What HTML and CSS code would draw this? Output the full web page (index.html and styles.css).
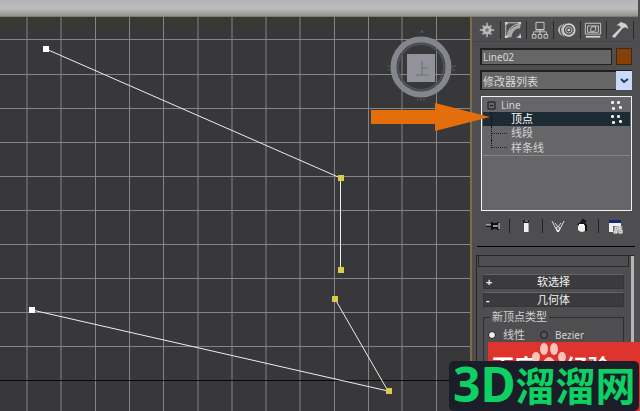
FILE: index.html
```html
<!DOCTYPE html>
<html lang="zh-CN">
<head>
<meta charset="utf-8">
<title>Line02</title>
<link rel="stylesheet" href="styles.css">
</head>
<body>
<header class="titlebar"></header>
<main class="workspace">
  <section class="viewport">
    <svg class="scene" aria-hidden="true">
      <path class="grid" d="M27 0V395M61 0V395M95.500 0V395M129.500 0V395M163.500 0V395M198 0V395M232 0V395M266 0V395M300 0V395M334.500 0V395M368.500 0V395M402 0V395M436.500 0V395M0 22.500H470M0 57.500H470M0 91.500H470M0 125.500H470M0 159.500H470M0 193.500H470M0 227.500H470M0 261.500H470M0 295.500H470M0 329.500H470"/>
      <path class="axis" d="M0 363.500H470"/>
      <path class="spline" d="M46 32L340.500 161V253M335 282L388 374L32 293"/>
      <path class="vertex" d="M43 29h6v6h-6zM29 290h6v6h-6z"/>
      <path class="vertex picked" d="M338 158h6v6h-6zM338 250h6v6h-6zM332 279h6v6h-6zM386 371h6v6h-6z"/>
      <g class="compass">
        <circle cx="421" cy="50" r="27.500"/>
        <circle class="inner" cx="421" cy="50" r="23"/>
        <path class="face" d="M407 37h28v28h-28z"/>
        <path class="mark" d="M422 44v14M416 58h13M422 51h6"/>
        <path class="ticks" d="M420 16l2-3 1 3M387 49h4M388 53h3M452 49h4M452 53h3M418 81v3M421 80v4M424 81v3"/>
      </g>
    </svg>
  </section>
  <aside class="panel">
    <nav class="tabs">
      <button aria-label="创建"><svg viewBox="0 0 20 20"><path class="line soft" d="M10 2V18M2 10H18M5 5l10 10M15 5L5 15"/><circle cx="10" cy="10" r="5" fill="#b8b8b8"/><circle cx="10" cy="10" r="2" fill="#777"/></svg></button>
      <button aria-label="修改"><svg viewBox="0 0 20 20"><path class="line thin" d="M2 18V2H18M7 18Q8 8 18 6M4 18Q3 5 18 3M14 18H18V14"/><path d="M4 18Q4 7 18 4V8Q10 8 8 18z" fill="#aaa"/><path class="fill" d="M1 1h3v3H1zM16 1h3v3h-3zM1 16h3v3H1zM16 16h3v3h-3z"/></svg></button>
      <button aria-label="层次"><svg viewBox="0 0 20 20"><path d="M5.500 1.500h9v8h-9z" fill="#777" class="line thin"/><path class="line thin" d="M5 10h10M10 9v6M3 15v-3h14v3M1.500 15h4v4h-4zM8 15h4v4H8zM14.500 15h4v4h-4z"/></svg></button>
      <button aria-label="运动"><svg viewBox="0 0 20 20"><circle class="line" cx="12" cy="10" r="6.500"/><circle class="line thin" cx="12" cy="10" r="3.500"/><circle class="fill" cx="12" cy="10" r="1.500"/><path class="line thin" d="M7 3Q1 10 7 17M4 4Q-1 10 4 16M2 6Q-1 10 2 14"/></svg></button>
      <button aria-label="显示"><svg viewBox="0 0 20 20"><path class="line thin" d="M1.500 2.500h17v12h-17zM4 5.500h12v7H4z"/><path class="line" d="M2 17.500h16"/><path class="line thin" d="M7.500 11.500V8l2-1.500h3.500V10l-2 1.500z"/></svg></button>
      <button aria-label="工具"><svg viewBox="0 0 20 20"><path class="fill" d="M6 5l5-4 5 2 2 2 1 4-3-2-3 1L4 19l-3-2L11 7 9 5z"/></svg></button>
    </nav>
    <div class="name-row">
      <input class="name" aria-label="名称" value="Line02">
      <button class="swatch" aria-label="颜色"></button>
    </div>
    <div class="picker">
      <select aria-label="修改器列表"><option>修改器列表</option></select>
      <svg viewBox="0 0 16 19" aria-hidden="true"><path d="M0 0h16v19H0z" fill="#c9dafb"/><path d="M5 8l3 3 4-3" fill="none" stroke="#27374f" stroke-width="2"/></svg>
    </div>
    <ul class="stack">
      <li class="root"><svg class="toggle" viewBox="0 0 9 9"><path d="M1 1h7v7H1zM3 4.500h3"/></svg><span>Line</span><i class="dots"></i></li>
      <li class="chosen"><b class="branch"></b><span>顶点</span><i class="dots"></i></li>
      <li><b class="branch"></b><span>线段</span></li>
      <li class="last"><b class="branch"></b><span>样条线</span></li>
    </ul>
    <div class="tools">
      <button aria-label="锁定堆栈"><svg viewBox="0 0 16 16"><path d="M1 8h6M7 4v8M8 6h4M8 10h4M13 4v8" stroke="#111" stroke-width="2"/><path d="M1 7h5M8 8h5M14 5v6" stroke="#ddd"/></svg></button>
      <span class="bar"></span>
      <button aria-label="显示最终结果"><svg viewBox="0 0 16 16"><path d="M5 2h6v3H5z" fill="#222"/><path d="M6 5h4v9H6z" fill="#eee"/><path d="M10.500 5v9M7 3h3" stroke="#aaa"/></svg></button>
      <span class="bar"></span>
      <button aria-label="使唯一"><svg viewBox="0 0 16 16"><path d="M2 3l5 10h2l5-10M5 5l3 4 3-4" fill="none" stroke="#ddd"/><path d="M6 9h4l-1 5H7z" fill="#eee"/><path d="M8 9v3" stroke="#111"/></svg></button>
      <button aria-label="移除修改器"><svg viewBox="0 0 16 16"><path d="M4 7h8v5q-4 4-8 0z" fill="#eee"/><path d="M4 7q4-4 8 0M7 5l2-3 3 2M12 7v6" fill="none" stroke="#111" stroke-width="2"/><path d="M5 7h5" stroke="#fff" stroke-width="2"/></svg></button>
      <span class="bar"></span>
      <button aria-label="配置修改器集"><svg viewBox="0 0 16 16"><path d="M2 2h12v12H2z" fill="#eee"/><path d="M2 2h12v3H2z" fill="#16277a"/><path d="M6 8h10v8H6z" fill="#666"/><path d="M4 7h3M4 10h2M8 9h3v3H8zM12 8h2v3h-2zM7 13h3v2H7zM12 12h3v3h-3z" stroke="#eee" fill="#999"/></svg></button>
    </div>
    <div class="rollouts">
      <div class="scroll">
        <div class="blank"></div>
        <button class="roll"><span>+</span>软选择</button>
        <button class="roll"><span>-</span>几何体</button>
        <fieldset class="group">
          <legend>新顶点类型</legend>
          <label><input type="radio" name="kind" checked>线性</label>
          <label><input type="radio" name="kind">Bezier</label>
        </fieldset>
      </div>
    </div>
  </aside>
</main>
<svg class="arrow" viewBox="0 0 121 28" aria-hidden="true"><path d="M1 7H65V0L120 14L65 28V21H1z"/></svg>
<div class="banner">
  <span>百度</span>
  <svg class="paw" viewBox="0 0 34 26" aria-hidden="true"><ellipse cx="12" cy="6" rx="4" ry="6"/><ellipse cx="22" cy="6" rx="4" ry="6"/><ellipse cx="4" cy="14" rx="4" ry="5"/><ellipse cx="30" cy="14" rx="4" ry="5"/><path d="M17 14q5 0 9 12H8q4-12 9-12z"/></svg>
  <span>经验</span>
</div>
<div class="watermark"><span class="latin">3D</span><span>溜溜网</span></div>
</body>
</html>
```
FILE: styles.css
```css
* { box-sizing: border-box; }
body {
  margin: 0;
  height: 100vh;
  display: flex;
  flex-direction: column;
  position: relative;
  overflow: hidden;
  background: #4e4e50;
  color: #d2d2d2;
  font: 12px/14px "Noto Sans", "Noto Sans CJK SC", sans-serif;
}
button { border: 0; padding: 0; background: none; color: inherit; font: inherit; }
svg { display: block; }

.titlebar {
  flex: 0 0 17px;
  margin-right: 2px;
  background: linear-gradient(#b4b4b8, #bcbcbe 50%, #99998f 90%, #777064);
}
.workspace { flex: 1; min-height: 0; display: grid; grid-template-columns: 1fr 168px; }

.viewport {
  min-width: 0;
  border: solid #796e42;
  border-width: 0 2px 0 0;
  background: linear-gradient(#39392f, #38373a 16px);
}
.scene { width: 100%; height: 100%; }
.scene path, .scene circle { fill: none; }
.scene .grid { stroke: #858585; }
.scene .axis { stroke: #080808; }
.scene .spline { stroke: #eee; }
.scene .vertex { fill: #fff; }
.scene .picked { fill: #dccb4a; }
.compass circle { stroke: #84868d; stroke-width: 6; }
.compass .inner { stroke: #515259; stroke-width: 2; }
.scene .face { fill: #92939a; }
.compass .mark { stroke: #6d6e75; stroke-width: 1; }
.compass .ticks { stroke: #5a5b60; }

.panel { min-width: 0; padding: 0 8px 0 8px; display: flex; flex-direction: column; }
.tabs { display: grid; grid-template-columns: repeat(6, 1fr); height: 25px; margin: 0 -2px 6px -6px; border-bottom: 1px solid #444; }
.tabs button { display: grid; place-items: center; border-right: 1px solid #2b2b2b; margin: 4px 0 2px; }
.tabs svg { width: 18px; height: 18px; }
.tabs .line { fill: none; stroke: #d0d0d0; stroke-width: 2; }
.tabs .soft { stroke: #a4a4a4; }
.tabs .thin { stroke-width: 1; }
.tabs .fill { fill: #d0d0d0; }

.name-row { display: flex; gap: 4px; height: 17px; margin-bottom: 5px; }
.name {
  flex: 1; min-width: 0; padding: 0 1px;
  border: 1px solid #222; border-width: 2px 1px 1px 2px; border-radius: 0;
  background: #666; color: #d8d8d8; font: 10px/14px "Noto Sans", sans-serif;
}
.swatch { width: 16px; background: #873f08; border: 1px solid #3b2a1c; }
.picker { position: relative; height: 20px; margin-bottom: 6px; }
.picker select {
  appearance: none; width: 100%; height: 100%; padding: 0 1px;
  border: solid #202020; border-width: 2px 0 1px 2px; border-radius: 0;
  background: #666; color: #d8d8d8; font: 11px/16px "Noto Sans CJK SC", sans-serif;
}
.picker svg { position: absolute; right: 0; top: 1px; width: 16px; height: 19px; pointer-events: none; }

.stack {
  list-style: none; margin: 0 0 0 1px; padding: 1px 1px 0;
  height: 115px; border: 1px solid #f0f4f6; background: #666567;
  font-size: 11px; line-height: 14px;
}
.stack li { display: flex; align-items: center; height: 14px; padding: 0 7px 0 4px; }
.stack .root span { margin-left: 5px; font-size: 10px; }
.stack .chosen { background: #1c2b34; color: #fff; }
.stack .last { height: 16px; border-bottom: 1px solid #858585; }
.toggle { width: 9px; height: 9px; }
.toggle path { fill: none; stroke: #161616; }
.branch { width: 16px; height: 14px; margin: 0 4px; border-left: 1px dotted #111; background: repeating-linear-gradient(90deg, #222 0 1px, transparent 1px 2px) 0 7px / 16px 1px no-repeat; }
.last .branch { height: 8px; align-self: flex-start; }
.dots {
  width: 13px; height: 9px; margin-left: auto;
  background:
    radial-gradient(circle, #fff 1px, transparent 2px) 0 -1px / 5px 5px no-repeat,
    radial-gradient(circle, #fff 1px, transparent 2px) 6px -1px / 5px 5px no-repeat,
    radial-gradient(circle, #fff 1px, transparent 2px) 1px 5px / 5px 5px no-repeat,
    radial-gradient(circle, #fff 1px, transparent 2px) 8px 4px / 5px 5px no-repeat;
}

.tools { display: flex; align-items: center; justify-content: space-between; height: 36px; margin: 0 -3px; padding: 0 12px 6px 8px; border-bottom: 1px solid #050505; }
.tools svg { width: 16px; height: 16px; }
.bar { width: 1px; height: 14px; background: #222; }

.rollouts { flex: 1; min-height: 0; margin: 8px -2px 0 -4px; padding: 0 5px 0 1px; border: solid #272727; border-width: 1px 0 0 1px; background: linear-gradient(#b5b5b5, #b5b5b5) right 0 / 3px 100% no-repeat; }
.scroll { height: 100%; overflow: hidden; }
.blank { height: 11px; margin-bottom: 7px; border: 1px solid #292929; border-top: 0; }
.roll { display: block; position: relative; width: calc(100% - 10px); height: 15px; margin: 0 5px 3px; background: #3b3b3d; border: 1px solid #353537; border-top-color: #656567; color: #f0f0f0; font-size: 11px; line-height: 12px; }
.roll span { position: absolute; left: 2px; font-weight: 700; }
.group { margin: 3px 5px 0; padding: 4px 4px 60px; border: 1px solid #2e2e2e; display: flex; gap: 15px; }
.group legend { margin-left: 2px; padding: 0 2px; font-size: 11px; line-height: 14px; }
.group label { display: flex; align-items: center; gap: 7px; font-size: 11px; line-height: 14px; }
.group label + label { font-size: 10px; }
.group input { appearance: none; width: 8px; height: 8px; margin: 0; border: 1px solid #1e1e1e; border-radius: 50%; background: #555; }
.group input:checked { background: #eee; }

.arrow { position: absolute; left: 370px; top: 103px; width: 121px; height: 28px; }
.arrow path { fill: #e46e0c; }
.banner {
  position: absolute; left: 488px; right: 0; top: 342px; bottom: 0;
  display: flex; align-items: flex-start; padding: 0 4px;
  background: #df342d; color: #fff;
  font: 700 22px/46px "Noto Sans CJK SC", sans-serif; white-space: nowrap;
}
.paw { flex: none; width: 34px; height: 26px; margin: 1px 0 0 -4px; fill: #fbc5bb; }
.watermark {
  position: absolute; right: 1px; bottom: 0; width: 190px; height: 50px;
  padding-left: 4px; display: flex; align-items: flex-start;
  border-radius: 5px; background: #1b1d29; color: #0ed164;
  font: 700 40px/46px "Noto Sans CJK SC", sans-serif; white-space: nowrap;
}
.watermark .latin { font-family: "Noto Sans", sans-serif; font-size: 48px; }
```
